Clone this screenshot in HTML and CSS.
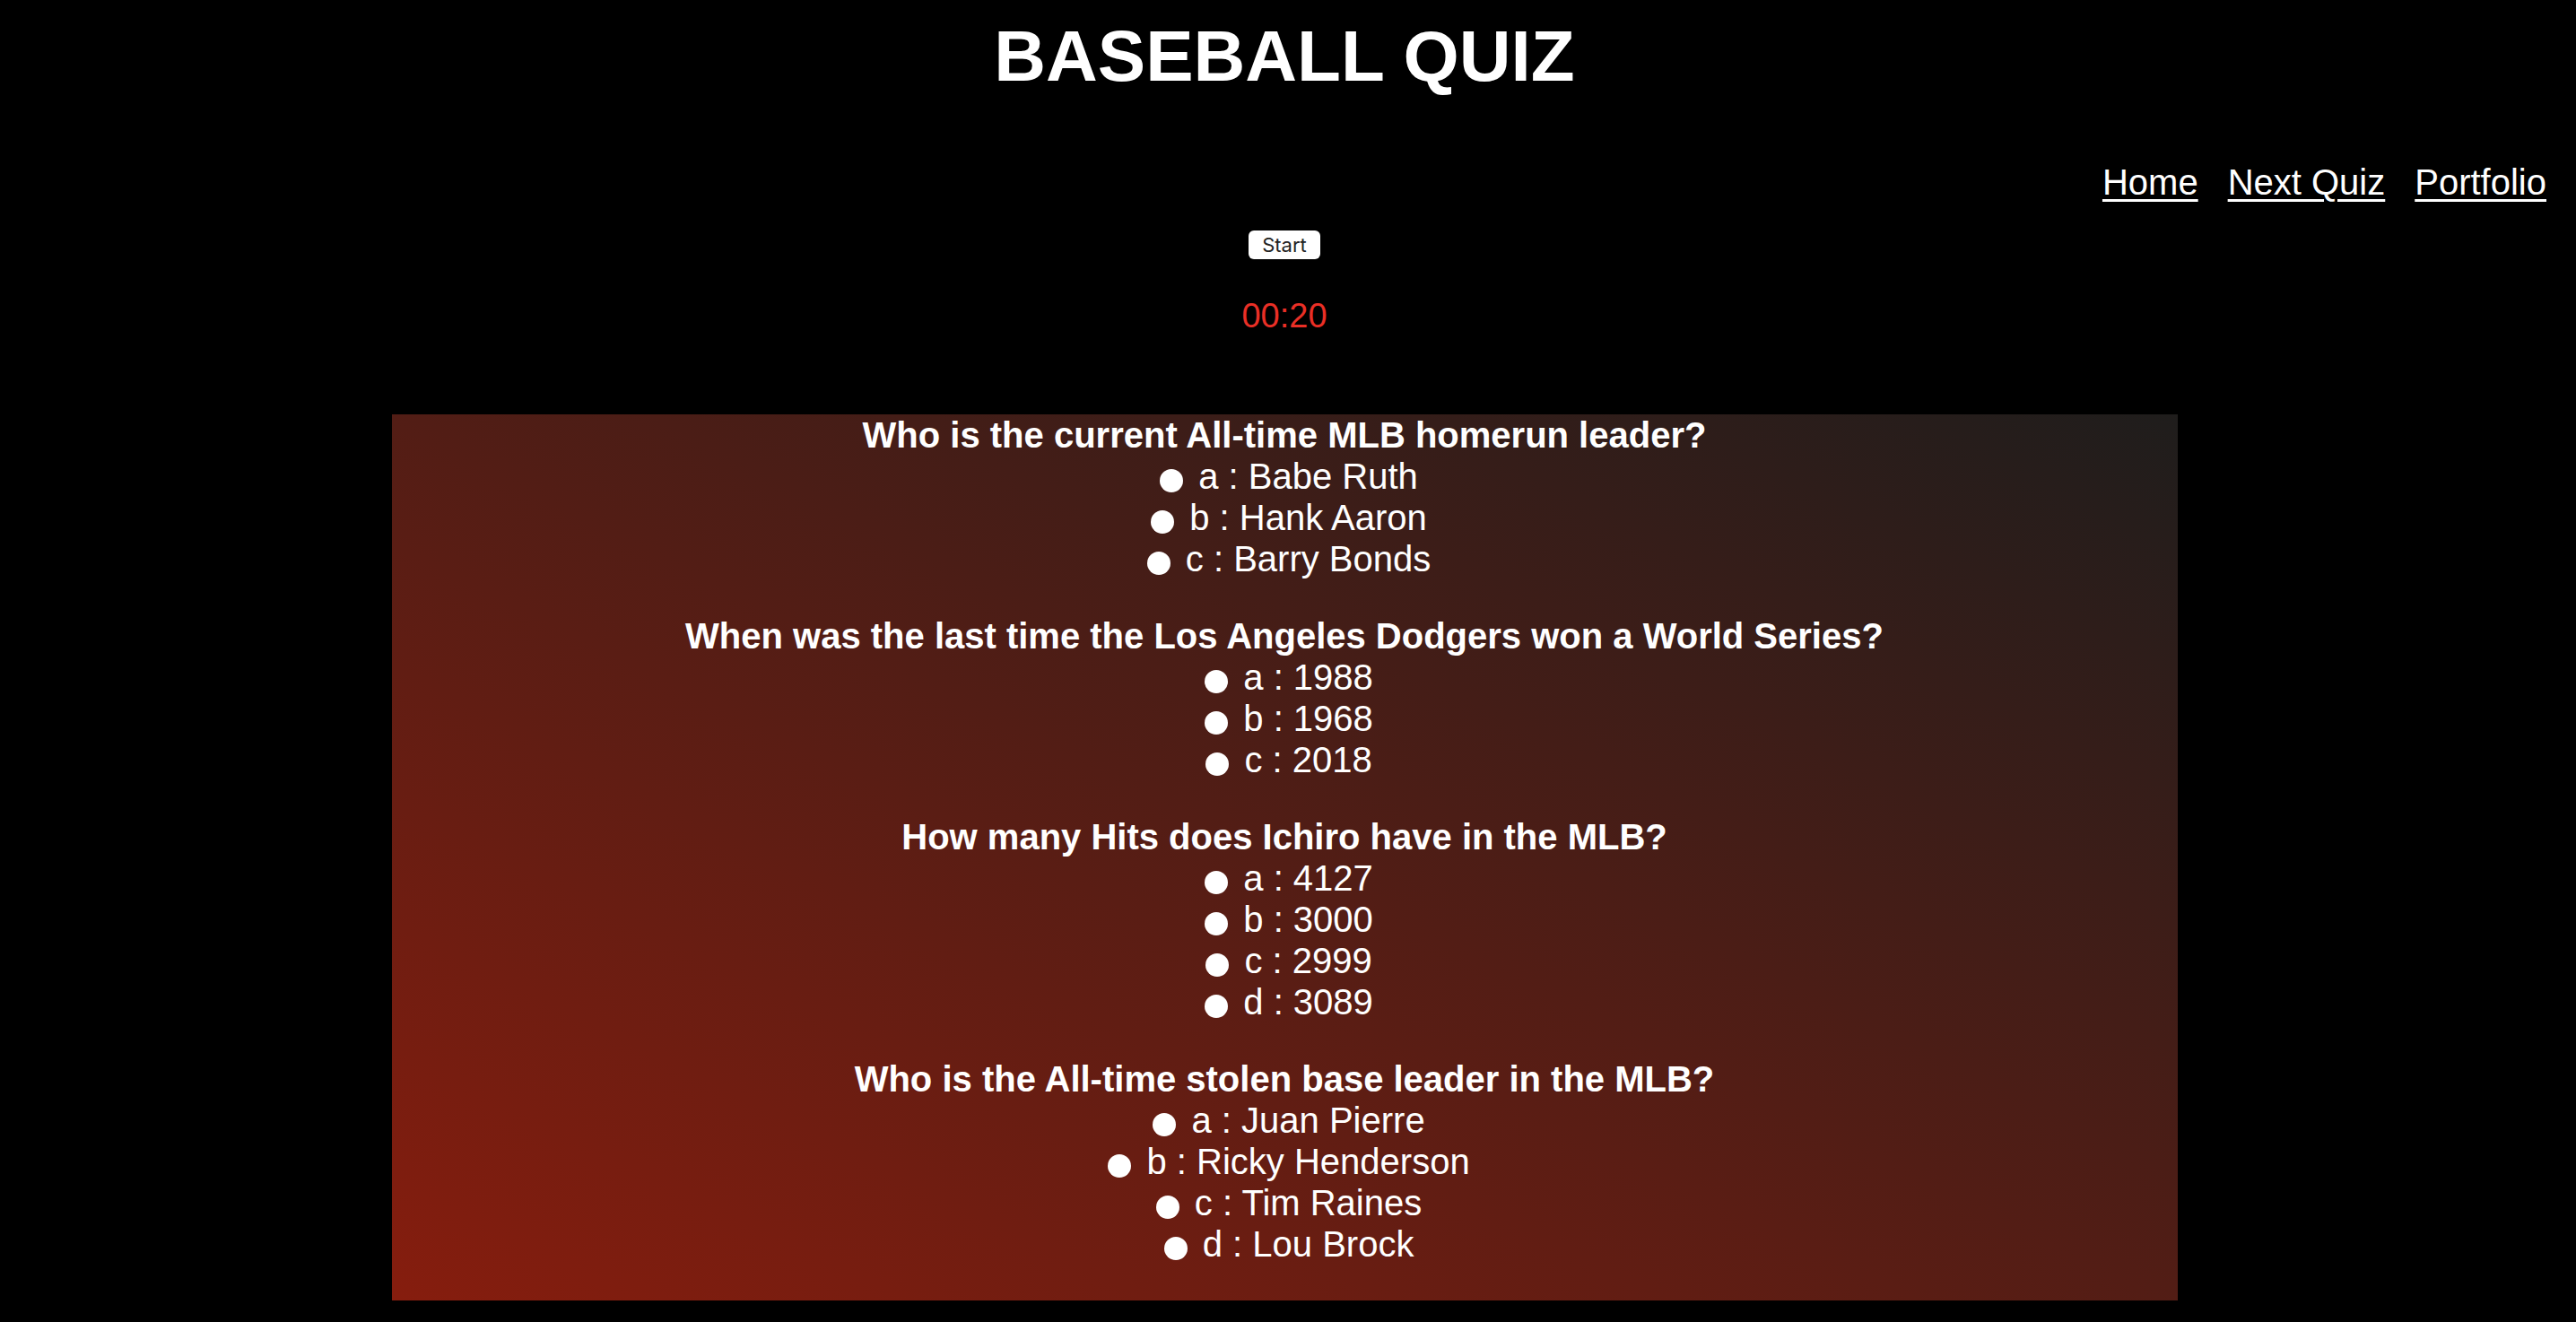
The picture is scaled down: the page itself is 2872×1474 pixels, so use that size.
FILE: index.html
```html
<!DOCTYPE html>
<html lang="en">
<head>
<meta charset="utf-8">
<title>Baseball Quiz</title>
<link rel="stylesheet" href="styles.css">
</head>
<body>
<h1 class="title">BASEBALL QUIZ</h1>
<nav class="nav">
  <a href="#">Home</a>
  <a href="#">Next Quiz</a>
  <a href="#">Portfolio</a>
</nav>
<button class="start" type="button">Start</button>
<div class="timer">00:20</div>
<form class="quiz">
  <div class="q">
    <div class="question">Who is the current All-time MLB homerun leader?</div>
    <div class="opt"><label><input type="radio" name="q1"> a : Babe Ruth</label></div>
    <div class="opt"><label><input type="radio" name="q1"> b : Hank Aaron</label></div>
    <div class="opt"><label><input type="radio" name="q1"> c : Barry Bonds</label></div>
  </div>
  <div class="q">
    <div class="question">When was the last time the Los Angeles Dodgers won a World Series?</div>
    <div class="opt"><label><input type="radio" name="q2"> a : 1988</label></div>
    <div class="opt"><label><input type="radio" name="q2"> b : 1968</label></div>
    <div class="opt"><label><input type="radio" name="q2"> c : 2018</label></div>
  </div>
  <div class="q">
    <div class="question">How many Hits does Ichiro have in the MLB?</div>
    <div class="opt"><label><input type="radio" name="q3"> a : 4127</label></div>
    <div class="opt"><label><input type="radio" name="q3"> b : 3000</label></div>
    <div class="opt"><label><input type="radio" name="q3"> c : 2999</label></div>
    <div class="opt"><label><input type="radio" name="q3"> d : 3089</label></div>
  </div>
  <div class="q">
    <div class="question">Who is the All-time stolen base leader in the MLB?</div>
    <div class="opt"><label><input type="radio" name="q4"> a : Juan Pierre</label></div>
    <div class="opt"><label><input type="radio" name="q4"> b : Ricky Henderson</label></div>
    <div class="opt"><label><input type="radio" name="q4"> c : Tim Raines</label></div>
    <div class="opt"><label><input type="radio" name="q4"> d : Lou Brock</label></div>
  </div>
</form>
</body>
</html>
```
FILE: styles.css
```css
html, body {
  background: #000;
}
body {
  margin: 0;
  padding: 0 8px 0 0;
  color: #fff;
  font-family: "Liberation Sans", Arial, Helvetica, sans-serif;
}
.title {
  margin: 17px 0 0;
  font-size: 80px;
  line-height: 92px;
  font-weight: bold;
  text-align: center;
}
.nav {
  margin-top: 71px;
  display: flex;
  justify-content: flex-end;
  gap: 33px;
  padding-right: 25px;
  font-size: 40px;
  line-height: 46px;
}
.nav a {
  color: #fff;
  text-decoration: underline;
  text-decoration-thickness: 3px;
  text-underline-offset: 5px;
}
.start {
  display: block;
  margin: 31px auto 0;
  width: 80px;
  height: 32px;
  padding: 0;
  border: none;
  border-radius: 6px;
  background: #fff;
  color: #222;
  font-family: Inter, "Noto Sans", sans-serif;
  font-size: 22px;
  line-height: 32px;
}
.timer {
  margin-top: 41px;
  text-align: center;
  color: #ea2f26;
  font-size: 38px;
  line-height: 44px;
}
.quiz {
  width: 1991px;
  margin: 88px auto 0;
  background: linear-gradient(to top right, #861d0e, #1f1d1c);
  text-align: center;
  font-size: 40px;
  line-height: 46px;
  display: flow-root;
}
.q {
  margin-bottom: 40px;
}
.question {
  font-weight: bold;
}
.opt input {
  appearance: none;
  -webkit-appearance: none;
  width: 26px;
  height: 26px;
  margin: 0 6px 0 10px;
  border: none;
  border-radius: 50%;
  background: #fff;
  vertical-align: -4px;
}
```
